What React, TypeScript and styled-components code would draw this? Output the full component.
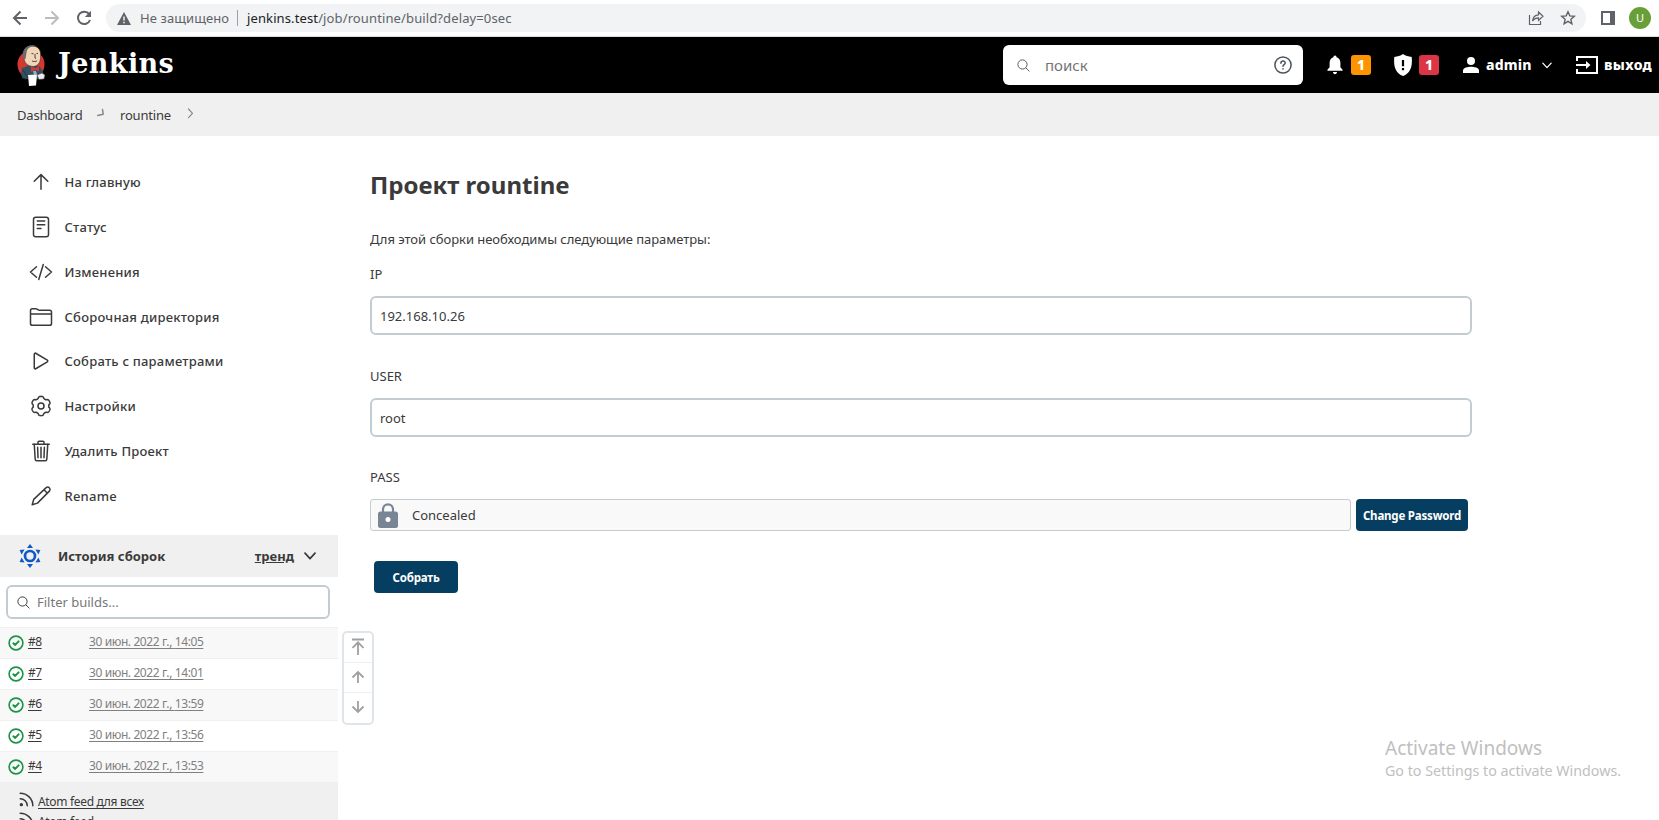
import React from "react";
import styled, { createGlobalStyle, css } from "styled-components";
import { IoReaderOutline, IoTrashOutline, IoFolderOutline, IoPlayOutline, IoCodeSlashOutline, IoSearchOutline } from "react-icons/io5";

const Global = createGlobalStyle`
  *, *::before, *::after { box-sizing: border-box; }
  body {
    margin: 0;
    background: #fff;
    color: #3a3a3a;
    font-family: "Noto Sans", sans-serif;
    font-size: 13px;
    line-height: 18px;
    white-space: nowrap;
  }
  svg { display: block; flex: none; }
`;

const Page = styled.div`
  display: flex;
  flex-direction: column;
  width: 1659px;
  height: 820px;
  overflow: hidden;
  position: relative;
`;

/* Browser toolbar */
const BrowserBar = styled.div`
  flex: none;
  height: 37px;
  padding: 4px 8px 4px 12px;
  display: flex;
  align-items: flex-start;
  border-bottom: 1px solid #dadce0;
`;
const NavButtons = styled.div`
  display: flex;
  gap: 16px;
  height: 28px;
  width: 94px;
  align-items: center;
`;
const AddressPill = styled.div`
  display: flex;
  align-items: center;
  width: 1480px;
  height: 28px;
  padding: 0 10px 0 11px;
  border-radius: 14px;
  background: #f1f3f4;
  color: #5f6368;
`;
const Insecure = styled.span`
  margin-left: 9px;
  width: 89px;
  letter-spacing: 0.1px;
`;
const Divider = styled.span`
  width: 1px;
  height: 16px;
  margin: 0 9px 0 8px;
  background: #9aa0a6;
`;
const Url = styled.span`
  flex: 1;
  letter-spacing: 0.12px;
  b { font-weight: 400; color: #202124; }
`;
const AddressActions = styled.div`
  display: flex;
  gap: 16px;
`;
const BrowserRight = styled.div`
  display: flex;
  align-items: center;
  gap: 14px;
  height: 28px;
  margin-left: 15px;
`;
const Avatar = styled.span`
  width: 22px;
  height: 22px;
  border-radius: 50%;
  background: #689f38;
  color: #fff;
  font-size: 11px;
  line-height: 22px;
  text-align: center;
`;

/* Jenkins header */
const Header = styled.header`
  flex: none;
  height: 56px;
  display: flex;
  align-items: center;
  padding-left: 17px;
  background: #000;
  color: #fff;
`;
const Brand = styled.span`
  margin-left: 12px;
  font-family: "DejaVu Serif", serif;
  font-weight: 700;
  font-size: 27px;
  letter-spacing: 0.4px;
  line-height: 34px;
  padding-bottom: 3px;
`;
const SearchBox = styled.div`
  display: flex;
  align-items: center;
  width: 300px;
  height: 40px;
  margin-left: auto;
  padding: 0 11px 0 13px;
  border-radius: 6px;
  background: #fff;
  color: #757575;
  font-size: 15px;
`;
const SearchText = styled.span`
  flex: 1;
  margin-left: 14px;
`;
const HeaderTools = styled.div`
  display: flex;
  align-items: center;
  width: 356px;
  font-weight: 800;
  font-size: 14px;
  letter-spacing: 0.15px;
`;
const Tool = styled.div<{ $gap: number; $inner: number }>`
  display: flex;
  align-items: center;
  margin-left: ${(p) => p.$gap}px;
  gap: ${(p) => p.$inner}px;
`;
const AlertBadge = styled.span<{ $color: string }>`
  width: 20px;
  height: 20px;
  border-radius: 3px;
  background: ${(p) => p.$color};
  line-height: 20px;
  text-align: center;
`;
const UserName = styled.span`
  width: 49px;
`;
const LogOut = styled.span`
  letter-spacing: 0.35px;
`;

/* Breadcrumbs */
const Crumbs = styled.nav`
  flex: none;
  height: 43px;
  display: flex;
  align-items: center;
  padding: 0 0 0 17px;
  background: #f0f0f0;
`;
const Crumb = styled.span<{ $w: number }>`
  width: ${(p) => p.$w}px;
  margin-right: 14px;
  letter-spacing: -0.2px;
`;
const CrumbLink = styled.span`
  display: flex;
  align-items: center;
  margin-right: 15px;
`;

const Body = styled.div`
  flex: 1;
  display: flex;
  min-height: 0;
`;

/* Left panel */
const Side = styled.aside`
  width: 338px;
  flex: none;
`;
const Tasks = styled.nav`
  padding-top: 23.6px;
  height: 399px;
`;
const Task = styled.a`
  display: flex;
  align-items: center;
  gap: 11.500px;
  height: 44.850px;
  padding-left: 29px;
  font-weight: 500;
  letter-spacing: 0.220px;
`;
const HistoryHead = styled.div`
  display: flex;
  align-items: center;
  height: 42px;
  padding: 0 22px 1px 18px;
  background: #f0f0f0;
  font-weight: 700;
`;
const HistoryTitle = styled.span`
  flex: 1;
  margin-left: 16px;
`;
const Trend = styled.a`
  margin-right: 10px;
  text-decoration: underline;
`;
const FilterBox = styled.div`
  display: flex;
  align-items: center;
  gap: 6px;
  width: 324px;
  height: 34px;
  margin: 8px 0 8px 6px;
  padding-left: 8px;
  border: 2px solid #c3ccd1;
  border-radius: 6px;
  color: #777;
`;
const BuildRow = styled.div<{ $shade: boolean }>`
  display: flex;
  align-items: center;
  height: 31px;
  padding-left: 8px;
  border-top: 1px solid #efefef;
  background: ${(p) => (p.$shade ? "#f8f8f8" : "#fff")};
  font-size: 12px;
`;
const underlined = css`
  padding-bottom: 3px;
  text-decoration: underline;
  text-underline-offset: 2px;
`;
const BuildNo = styled.a`
  ${underlined}
  width: 61px;
  margin-left: 4px;
  letter-spacing: -0.5px;
`;
const BuildDate = styled.a`
  ${underlined}
  color: #808080;
  letter-spacing: -0.4px;
`;
const Feeds = styled.div`
  height: 60px;
  padding-top: 10px;
  background: #f0f0f0;
`;
const Feed = styled.a`
  display: flex;
  height: 20px;
  padding-left: 17px;
  gap: 2px;
  font-size: 12px;
  letter-spacing: -0.32px;
  line-height: 20px;
  text-decoration: underline;
  text-underline-offset: 2px;
  svg { margin-top: -2px; }
`;

/* Floating page scroller */
const Scroller = styled.div`
  position: absolute;
  left: 342px;
  top: 631px;
  width: 32px;
  height: 94px;
  display: grid;
  grid-template-rows: 29px 30px 31px;
  border: 2px solid #e0e5ea;
  border-radius: 5px;
  background: #fff;
`;
const ScrollStep = styled.span`
  display: flex;
  align-items: center;
  justify-content: center;
  padding-bottom: 2px;
  & + & { border-top: 1px solid #eee; }
`;

/* Main form */
const Main = styled.main`
  flex: 1;
  padding: 30px 0 0 32px;
`;
const Title = styled.h1`
  margin: 0 0 27px;
  font-size: 24px;
  line-height: 37px;
`;
const Lead = styled.p`
  margin: 0 0 17px;
  height: 18px;
  letter-spacing: -0.04px;
`;
const Field = styled.div<{ $h: number }>`
  height: ${(p) => p.$h}px;
`;
const Label = styled.label`
  display: block;
  margin-bottom: 13px;
  line-height: 18px;
`;
const Input = styled.div`
  display: flex;
  align-items: center;
  width: 1102px;
  height: 39px;
  padding-left: 8px;
  border: 2px solid #c3ccd1;
  border-radius: 6px;
`;
const PasswordRow = styled.div`
  display: flex;
  gap: 5px;
`;
const Concealed = styled.div`
  display: flex;
  align-items: center;
  gap: 14px;
  width: 981px;
  height: 32px;
  padding-left: 7px;
  border: 1px solid #c3ccd1;
  border-radius: 3px;
  background: #f9f9f9;
`;
const Button = styled.button<{ $w: number; $left?: number }>`
  width: ${(p) => p.$w}px;
  height: 32px;
  margin: 0 0 0 ${(p) => p.$left ?? 0}px;
  padding: 1px 0 0;
  border: 0;
  border-radius: 4px;
  background: #063e62;
  color: #fff;
  font: 700 11.5px/31px "Noto Sans", sans-serif;
  letter-spacing: -0.2px;
`;

const Watermark = styled.div`
  position: absolute;
  left: 1385px;
  top: 734px;
  color: #c0c0c0;
  font-size: 19px;
  line-height: 28px;
  small {
    display: block;
    font-size: 14.25px;
    line-height: 18px;
  }
`;

/* Six-lobed cog outline */
const gearPath = (() => {
  const pts: string[] = [];
  for (let i = 0; i < 96; i++) {
    const a = (i / 96) * Math.PI * 2;
    const c = Math.cos(6 * (a - Math.PI / 2));
    const r = 8.7 + 0.95 * Math.tanh(2.4 * (c + 0.2));
    pts.push(`${(12 + r * Math.cos(a)).toFixed(2)} ${(12 + r * Math.sin(a)).toFixed(2)}`);
  }
  return `M${pts.join("L")}Z`;
})();

const line = { fill: "none", stroke: "currentColor", strokeLinecap: "round", strokeLinejoin: "round" } as const;

const ArrowUp = () => (
  <svg width="24" height="24" viewBox="0 0 24 24" {...line} strokeWidth="1.5">
    <path d="M5.200 11.300L12 4.600l6.800 6.700M12 4.800v14.400" />
  </svg>
);
const Gear = () => (
  <svg width="24" height="24" viewBox="0 0 24 24" {...line} strokeWidth="1.5">
    <path d={gearPath} />
    <circle cx="12" cy="12" r="3" />
  </svg>
);
const Pencil = () => (
  <svg width="24" height="24" viewBox="0 0 24 24" {...line} strokeWidth="1.5">
    <path d="M3.200 20.800l1.500-5.400L17.200 3.600a2.400 2.400 0 0 1 3.400 3.300L8.500 19.100zM15 5.800l3.400 3.400" />
  </svg>
);
const Chevron = ({ w, h, sw = 1.5 }: { w: number; h: number; sw?: number }) => (
  <svg width={w} height={h} viewBox="0 0 12 8" {...line} strokeWidth={sw}>
    <path d="M1 1.200l5 5.400 5-5.400" />
  </svg>
);
const Butler = () => (
  <svg width="29" height="42" viewBox="0 0 29 42">
    <ellipse cx="14" cy="20.5" rx="13.5" ry="14" fill="#d33833" />
    <path d="M5 24l7-2.5 10 .5 4 5 .5 6-4 2-4 .5-13-1L4 30z" fill="#335061" />
    <path d="M7 13C6 6 9 2 15 2c6 0 9 4 8.500 9 .5 6-1.500 11-7 11.500C10 22 7 19 7 13z" fill="#f0d6b7" stroke="#3b302a" strokeWidth=".6" />
    <path d="M6.500 15C4 7 8 1.500 15 1.200c2 0 4 .6 5 1.600-6-.8-10 1-10.500 6L8.500 15z" fill="#6d6b6d" />
    <path d="M14.500 9.500l2 .3M19.500 9.500h1.500M18 10v4l1 .5M15 17c2 .8 4 .7 5-.3" stroke="#3b302a" strokeWidth=".9" fill="none" />
    <path d="M14 22.500l4.500 1.800L22 21.800v5.500l-4-1.300-4 2z" fill="#d33833" />
    <path d="M16 27l3 0 1 3-3 1z" fill="#8fb3c6" />
    <path d="M11 31l9-.5-1 11-7 .5z" fill="#fff" />
    <path d="M20 31l5-2 3 2-1 4-5 .5z" fill="#e9ecee" stroke="#3b302a" strokeWidth=".5" />
    <path d="M6 26l5 8M5 33l4 3" stroke="#1d2f3b" strokeWidth=".8" />
  </svg>
);
const StatusOk = () => (
  <svg width="16" height="16" viewBox="0 0 16 16" {...line} stroke="#1a9346">
    <circle cx="8" cy="8" r="6.900" strokeWidth="1.600" />
    <path d="M5.400 8.200l1.800 1.700 3.400-3.500" strokeWidth="2" />
  </svg>
);
const Rss = () => (
  <svg width="19" height="19" viewBox="0 0 24 24" {...line} strokeWidth="1.900">
    <path d="M4 11a9 9 0 0 1 9 9M4 4a16 16 0 0 1 16 16" />
    <circle cx="5.500" cy="18.500" r="1.200" fill="currentColor" />
  </svg>
);
const BuildsWheel = () => (
  <svg width="24" height="26" viewBox="-12 -13 24 26" fill="#0f58c8">
    <circle r="5" fill="none" stroke="#0f58c8" strokeWidth="2.700" />
    {[0, 60, 120, 180, 240, 300].map((a) => (
      <path key={a} d="M-3-8L0-12l3 4z" transform={`rotate(${a})`} />
    ))}
  </svg>
);

const tasks: [string, React.ReactNode][] = [
  ["На главную", <ArrowUp />],
  ["Статус", <IoReaderOutline size={24} />],
  ["Изменения", <IoCodeSlashOutline size={24} />],
  ["Сборочная директория", <IoFolderOutline size={24} />],
  ["Собрать с параметрами", <IoPlayOutline size={24} />],
  ["Настройки", <Gear />],
  ["Удалить Проект", <IoTrashOutline size={24} />],
  ["Rename", <Pencil />],
];
const builds = [
  ["#8", "14:05"],
  ["#7", "14:01"],
  ["#6", "13:59"],
  ["#5", "13:56"],
  ["#4", "13:53"],
];

export default function App() {
  return (
    <Page>
      <Global />
      <BrowserBar>
        <NavButtons>
          <svg width="16" height="16" viewBox="0 0 16 16" fill="none" stroke="#5f6368" strokeWidth="2"><path d="M15 8H2.500M8.500 1.500L2 8l6.500 6.500" /></svg>
          <svg width="16" height="16" viewBox="0 0 16 16" fill="none" stroke="#babcbe" strokeWidth="2"><path d="M1 8h12.500M7.500 1.500L14 8l-6.500 6.500" /></svg>
          <svg width="16" height="16" viewBox="0 0 16 16" fill="none" stroke="#5f6368" strokeWidth="2"><path d="M13.200 4.200A6.200 6.200 0 1 0 14 10" /><path d="M15 .8v6.200H8.800z" fill="#5f6368" stroke="none" /></svg>
        </NavButtons>
        <AddressPill>
          <svg width="14" height="13" viewBox="0 0 14 13"><path d="M7 0l7 13H0z" fill="#5f6368" /><path d="M7 4.500v4M7 9.700v1.600" stroke="#f1f3f4" strokeWidth="1.500" /></svg>
          <Insecure>Не защищено</Insecure>
          <Divider />
          <Url><b>jenkins.test</b>/job/rountine/build?delay=0sec</Url>
          <AddressActions>
            <svg width="16" height="16" viewBox="0 0 16 16" fill="none" stroke="#5f6368" strokeWidth="1.200"><path d="M1.500 5v9.500h11V11M4.500 11C5 7 7 5 10.500 4.800V2L15 6.200l-4.500 4.200V7.800C8 7.800 6 8.800 4.500 11z" /></svg>
            <svg width="16" height="16" viewBox="0 0 16 16" fill="none" stroke="#5f6368" strokeWidth="1.400"><path d="M8 1.800l1.800 4.100 4.500.4-3.400 3 1 4.400L8 11.400l-3.900 2.300 1-4.400-3.400-3 4.500-.4z" /></svg>
          </AddressActions>
        </AddressPill>
        <BrowserRight>
          <svg width="14" height="14" viewBox="0 0 14 14"><path d="M0 0h14v14H0zM2 2v10h7V2z" fill="#5f6368" fillRule="evenodd" /></svg>
          <Avatar>U</Avatar>
        </BrowserRight>
      </BrowserBar>

      <Header>
        <Butler />
        <Brand>Jenkins</Brand>
        <SearchBox>
          <IoSearchOutline size={15} color="#4d545d" />
          <SearchText>поиск</SearchText>
          <svg width="18" height="18" viewBox="0 0 18 18" {...line} stroke="#4d545d" strokeWidth="1.500"><circle cx="9" cy="9" r="8.100" /><path d="M6.900 7.200c0-3 4.400-2.800 4.300-.2 0 1.500-2.200 1.600-2.200 3.200M9 12.700v.2" /></svg>
        </SearchBox>
        <HeaderTools>
          <Tool $gap={23} $inner={7}>
            <svg width="18" height="20" viewBox="0 0 19 20" fill="#fff"><path d="M9.500 0c1.100 0 1.600.8 1.600 1.700 2.700.7 4.100 3 4.100 5.900v4.900l2.300 2.600v1H1.500v-1l2.300-2.600V7.600c0-2.900 1.400-5.200 4.100-5.900C7.900.8 8.400 0 9.500 0zM7.400 17.500h4.200c0 3-4.200 3-4.200 0z" /></svg>
            <AlertBadge $color="#fe9500">1</AlertBadge>
          </Tool>
          <Tool $gap={23} $inner={7}>
            <svg width="18" height="22" viewBox="0 0 18 22"><path d="M9 0c2.500 2 5.500 2.600 8.700 2.900C18.500 12 17 18.500 9 22 1 18.500-.5 12 .3 2.900 3.500 2.600 6.500 2 9 0z" fill="#fff" /><path d="M9 6v6.200M9 14v2.200" stroke="#000" strokeWidth="2.200" /></svg>
            <AlertBadge $color="#dc3545">1</AlertBadge>
          </Tool>
          <Tool $gap={24} $inner={7}>
            <svg width="16" height="16" viewBox="0 0 16 16" fill="#fff"><circle cx="8" cy="4" r="4" /><path d="M0 16v-2.500C0 10.500 5 9.700 8 9.700s8 .8 8 3.800V16z" /></svg>
            <UserName>admin</UserName>
            <Chevron w={10} h={7} />
          </Tool>
          <Tool $gap={24} $inner={6}>
            <svg width="22" height="18" viewBox="0 0 22 18" fill="none" stroke="#fff" strokeWidth="2"><path d="M1 5V1h20v16H1v-4M0 9h12" /><path d="M10 5l4.500 4-4.500 4z" fill="#fff" stroke="none" /></svg>
            <LogOut>выход</LogOut>
          </Tool>
        </HeaderTools>
      </Header>

      <Crumbs>
        <Crumb $w={65}>Dashboard</Crumb>
        <CrumbLink>
          <svg width="9" height="14" viewBox="0 0 9 14" {...line} stroke="#888" strokeWidth="1.500"><path d="M6.500 1.500l.7 4.700L1.800 7.500" /></svg>
        </CrumbLink>
        <Crumb $w={53}>rountine</Crumb>
        <svg width="7" height="13" viewBox="0 0 7 13" {...line} stroke="#888" strokeWidth="1.200"><path d="M1.500 1l4 4.300-4 4.300" /></svg>
      </Crumbs>

      <Body>
        <Side>
          <Tasks>
            {tasks.map(([name, icon]) => (
              <Task key={name}>{icon}{name}</Task>
            ))}
          </Tasks>
          <HistoryHead>
            <BuildsWheel />
            <HistoryTitle>История сборок</HistoryTitle>
            <Trend>тренд</Trend>
            <Chevron w={12} h={8} sw={1.700} />
          </HistoryHead>
          <FilterBox>
            <IoSearchOutline size={15} color="#333" />
            Filter builds...
          </FilterBox>
          {builds.map(([no, time], i) => (
            <BuildRow key={no} $shade={i % 2 === 0}>
              <StatusOk />
              <BuildNo>{no}</BuildNo>
              <BuildDate>30 июн. 2022 г., {time}</BuildDate>
            </BuildRow>
          ))}
          <Feeds>
            <Feed><Rss />Atom feed для всех</Feed>
            <Feed><Rss />Atom feed</Feed>
          </Feeds>
        </Side>

        <Main>
          <Title>Проект rountine</Title>
          <Lead>Для этой сборки необходимы следующие параметры:</Lead>
          <Field $h={102}>
            <Label>IP</Label>
            <Input>192.168.10.26</Input>
          </Field>
          <Field $h={101}>
            <Label>USER</Label>
            <Input>root</Input>
          </Field>
          <Field $h={93}>
            <Label>PASS</Label>
            <PasswordRow>
              <Concealed>
                <svg width="20" height="25" viewBox="0 0 20 25"><path d="M5 9V6.300a5 5 0 0 1 10 0V9" fill="none" stroke="#788594" strokeWidth="2.200" /><rect y="8.500" width="20" height="16.500" rx="2.500" fill="#788594" /><circle cx="10" cy="16.500" r="2.500" fill="#fff" /></svg>
                Concealed
              </Concealed>
              <Button $w={112}>Change Password</Button>
            </PasswordRow>
          </Field>
          <Button $w={84} $left={4}>Собрать</Button>
        </Main>
      </Body>

      <Scroller>
        <ScrollStep>
          <svg width="14" height="17" viewBox="0 0 14 17" fill="none" stroke="#a0a0a0" strokeWidth="1.800"><path d="M1 1.500h12M7 17V5M1.500 9.800L7 4.300l5.500 5.500" /></svg>
        </ScrollStep>
        <ScrollStep>
          <svg width="14" height="14" viewBox="0 0 14 14" fill="none" stroke="#a0a0a0" strokeWidth="1.800"><path d="M7 13V2M1.500 7.500L7 2l5.500 5.500" /></svg>
        </ScrollStep>
        <ScrollStep>
          <svg width="14" height="14" viewBox="0 0 14 14" fill="none" stroke="#a0a0a0" strokeWidth="1.800"><path d="M7 1v11M1.500 6.500L7 12l5.500-5.500" /></svg>
        </ScrollStep>
      </Scroller>
      <Watermark>
        Activate Windows
        <small>Go to Settings to activate Windows.</small>
      </Watermark>
    </Page>
  );
}
